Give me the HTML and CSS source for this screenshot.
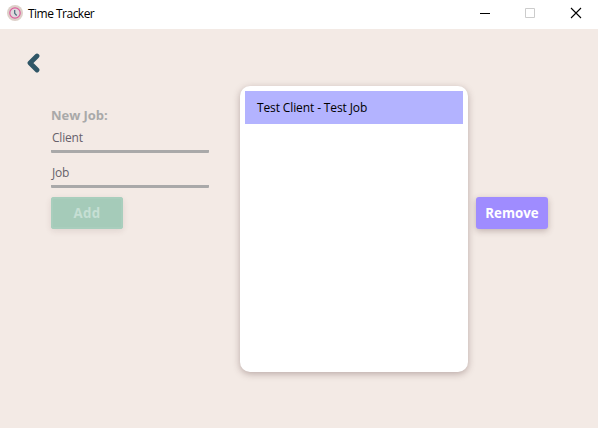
FILE: index.html
```html
<!DOCTYPE html>
<html lang="en">
<head>
<meta charset="utf-8">
<title>Time Tracker</title>
<link rel="stylesheet" href="styles.css">
</head>
<body>
<header class="titlebar">
  <svg class="app-icon" width="16" height="16" viewBox="0 0 16 16"><circle cx="8" cy="8" r="8" fill="#ddd0c9"/><circle cx="8" cy="8" r="5.2" fill="#e0d8dc" stroke="#dd5c9c" stroke-width="1.2"/><path d="M7.7 5v3.3l2 2.2" fill="none" stroke="#47687a" stroke-width="1.2"/></svg>
  <span class="title">Time Tracker</span>
  <div class="controls">
    <svg width="46" height="29" viewBox="0 0 46 29"><path d="M20 13.5h10" stroke="#000"/></svg>
    <svg width="46" height="29" viewBox="0 0 46 29"><path d="M19.5 8.5h9v9h-9z" fill="none" stroke="#ccc"/></svg>
    <svg width="46" height="29" viewBox="0 0 46 29"><path d="M19 8l10 10M29 8L19 18" stroke="#000" stroke-width="1.1"/></svg>
  </div>
</header>
<main class="page">
  <button class="back" aria-label="Back"><svg width="14" height="20" viewBox="0 0 14 20"><path d="M10 3L3 10l7 7" fill="none" stroke="#2f5666" stroke-width="4.8" stroke-linecap="round" stroke-linejoin="round"/></svg></button>
  <div class="content">
    <section class="form">
      <h1 class="heading">New Job:</h1>
      <div class="field"><span>Client</span></div>
      <div class="field"><span>Job</span></div>
      <button class="btn add"><span>Add</span></button>
    </section>
    <ul class="jobs"><li class="job-row"><span>Test Client - Test Job</span></li></ul>
    <button class="btn remove"><span>Remove</span></button>
  </div>
</main>
</body>
</html>
```
FILE: styles.css
```css
* { box-sizing: border-box; }
body {
  margin: 0;
  height: 428px;
  overflow: hidden;
  background: #f3eae5;
  font-family: "Open Sans", "Noto Sans", sans-serif;
  font-size: 12px;
  color: #000;
}
.titlebar {
  display: flex;
  height: 29px;
  padding-left: 7px;
  background: #fff;
}
.app-icon { margin-top: 5px; }
.title { margin-left: 5px; line-height: 28px; letter-spacing: -0.52px; white-space: nowrap; }
.controls { display: flex; margin-left: auto; }
.page { height: 399px; padding: 24px 50px 0 27px; }
.back { display: block; height: 20px; padding: 0; border: 0; background: none; }
.back svg { display: block; }
.content {
  display: flex;
  align-items: flex-start;
  margin: 13px 0 0 24px;
}
.form { width: 158px; padding-top: 19px; }
.heading {
  margin: 0;
  height: 21px;
  font-size: 13px;
  line-height: 20px;
  font-weight: 700;
  letter-spacing: -0.05px;
  color: #a9a9a9;
}
.field {
  height: 27px;
  padding-left: 1px;
  border-bottom: 3px solid #a9a9a9;
  border-radius: 1px;
  line-height: 24px;
  color: #66616a;
  letter-spacing: -0.2px;
}
.field + .field { margin-top: 8px; }
.btn {
  display: block;
  width: 72px;
  height: 32px;
  padding: 0;
  border: 0;
  border-radius: 3px;
  font: 700 13.3px/32px "Open Sans", "Noto Sans", sans-serif;
  color: #fff;
  box-shadow: 0 2px 6px rgba(80, 50, 50, 0.3);
}
.add {
  margin-top: 9px;
  background: #a5cbb9;
  color: #c6dfd4;
  letter-spacing: 0.3px;
  box-shadow: inset 0 0 0 2px #a9cebd, 0 2px 6px rgba(80, 50, 50, 0.12);
}
.jobs {
  width: 228px;
  height: 286px;
  margin: 0 0 0 31px;
  padding: 5px;
  border-radius: 10px;
  background: #fff;
  box-shadow: 0 2px 7px rgba(80, 50, 50, 0.35);
  list-style: none;
}
.job-row {
  height: 33px;
  padding-left: 12px;
  background: #b3b3ff;
  line-height: 33px;
  letter-spacing: -0.12px;
}
.remove { margin: 111px 0 0 8px; background: #9f8cff; }
```
